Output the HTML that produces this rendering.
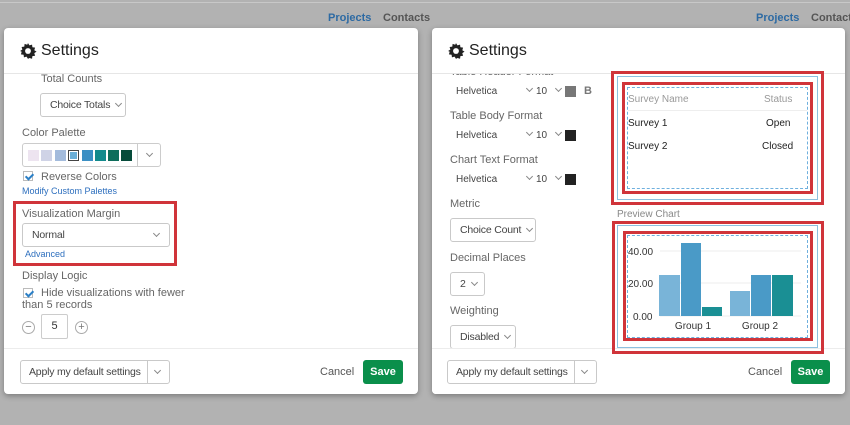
<!DOCTYPE html><html><head><style>
*{box-sizing:border-box;margin:0;padding:0}
body{width:850px;height:425px;background:#b2b2b2;font-family:"Liberation Sans",sans-serif;position:relative;overflow:hidden;color:#555}
.a{position:absolute;white-space:nowrap}
.m{position:absolute;background:#fff;border-radius:4px;box-shadow:0 2px 6px rgba(0,0,0,.3)}
.t{font-size:11px;color:#666}
.btn{position:absolute;border:1px solid #c9c9c9;border-radius:3px;background:#fff;font-size:10.5px;color:#444;display:flex;align-items:center;padding-left:9px;white-space:nowrap;letter-spacing:-0.2px}
.chev{display:inline-block;width:5px;height:5px;border-right:1px solid #888;border-bottom:1px solid #888;transform:rotate(45deg);margin-left:6px;margin-top:-3px;flex:none}
.red{position:absolute;border:3px solid #d0343a}
.cb{position:absolute;width:10px;height:10px;border:1px solid #bbb;background:#fff}
.cb:after{content:"";position:absolute;left:3px;top:0px;width:3px;height:6px;border-right:2px solid #2a7fc6;border-bottom:2px solid #2a7fc6;transform:rotate(45deg)}
.hd{position:absolute;font-size:16px;color:#222}
.save{position:absolute;background:#0a8f4b;color:#fff;font-weight:bold;font-size:11px;border-radius:3px;display:flex;align-items:center;justify-content:center}
.sw{position:absolute;top:150px;width:11px;height:11px}
</style></head><body>
<div class="a" style="left:0;top:2px;width:850px;height:1px;background:#c8c8c8"></div>
<div class="a" style="left:328px;top:12px;font-size:11px;font-weight:bold;color:#2d6aa3">Projects</div>
<div class="a" style="left:383px;top:12px;font-size:11px;font-weight:bold;color:#555">Contacts</div>
<div class="a" style="left:756px;top:12px;font-size:11px;font-weight:bold;color:#2d6aa3">Projects</div>
<div class="a" style="left:811px;top:12px;font-size:11px;font-weight:bold;color:#555">Contacts</div>

<!-- LEFT MODAL -->
<div class="m" style="left:4px;top:28px;width:414px;height:366px"></div>
<svg class="a" style="left:19px;top:42px" width="18" height="18" viewBox="0 0 16 16"><path d="M8 1l1.3 2 2.3-.7.3 2.4 2.4.3-.7 2.3 2 1.3-2 1.3.7 2.3-2.4.3-.3 2.4-2.3-.7L8 15l-1.3-2-2.3.7-.3-2.4-2.4-.3.7-2.3L1 8l2-1.3-.7-2.3 2.4-.3.3-2.4 2.3.7z" fill="#222"/><circle cx="8" cy="8" r="2.6" fill="#fff"/></svg>
<div class="hd" style="left:41px;top:42px">Settings</div>
<div class="a" style="left:4px;top:73px;width:414px;height:1px;background:#e6e6e6"></div>
<div class="a t" style="left:41px;top:73px">Total Counts</div>
<div class="btn" style="left:40px;top:93px;width:86px;height:24px">Choice Totals<span class="chev"></span></div>
<div class="a t" style="left:22px;top:127px">Color Palette</div>
<div class="a" style="left:22px;top:143px;width:116px;height:24px;border:1px solid #ccc;border-radius:3px 0 0 3px"></div>
<div class="a" style="left:137px;top:143px;width:24px;height:24px;border:1px solid #ccc;border-radius:0 3px 3px 0;display:flex;align-items:center;justify-content:center"><span class="chev" style="margin:0 0 3px 0"></span></div>
<div class="sw" style="left:28px;background:#ede4f0"></div>
<div class="sw" style="left:41px;background:#cfd3e6"></div>
<div class="sw" style="left:55px;background:#a3bbdc"></div>
<div class="sw" style="left:68px;background:#6aaed6;border:1px solid #444;outline:1px solid #fff;outline-offset:-2px"></div>
<div class="sw" style="left:82px;background:#3b8fc3"></div>
<div class="sw" style="left:95px;background:#128a8c"></div>
<div class="sw" style="left:108px;background:#0e6d5b"></div>
<div class="sw" style="left:121px;background:#064b3a"></div>
<div class="cb" style="left:23px;top:171px"></div>
<div class="a t" style="left:41px;top:171px">Reverse Colors</div>
<div class="a" style="left:22px;top:186px;font-size:9px;color:#2d6fbe">Modify Custom Palettes</div>
<div class="red" style="left:13px;top:201px;width:164px;height:65px"></div>
<div class="a t" style="left:22px;top:208px">Visualization Margin</div>
<div class="btn" style="left:22px;top:223px;width:148px;height:24px">Normal<span class="chev" style="position:absolute;right:10px;top:10px"></span></div>
<div class="a" style="left:25px;top:249px;font-size:9px;color:#2d6fbe">Advanced</div>
<div class="a t" style="left:22px;top:270px">Display Logic</div>
<div class="cb" style="left:23px;top:288px"></div>
<div class="a t" style="left:41px;top:287px">Hide visualizations with fewer</div>
<div class="a t" style="left:22px;top:299px">than 5 records</div>
<div class="a" style="left:22px;top:321px;width:13px;height:13px;border:1px solid #aaa;border-radius:50%;font-size:11px;line-height:10px;text-align:center;color:#777">−</div>
<div class="a" style="left:41px;top:314px;width:27px;height:25px;border:1px solid #ccc;border-radius:2px;font-size:11px;color:#333;text-align:center;line-height:23px">5</div>
<div class="a" style="left:75px;top:321px;width:13px;height:13px;border:1px solid #aaa;border-radius:50%;font-size:11px;line-height:11px;text-align:center;color:#777">+</div>
<div class="a" style="left:4px;top:348px;width:414px;height:1px;background:#ececec"></div>
<div class="btn" style="left:20px;top:360px;width:128px;height:24px;border-radius:3px 0 0 3px;padding-left:8px">Apply my default settings</div>
<div class="btn" style="left:147px;top:360px;width:23px;height:24px;border-radius:0 3px 3px 0;padding-left:6px"><span class="chev" style="margin:-3px 0 0 1px"></span></div>
<div class="a t" style="left:320px;top:366px;color:#555">Cancel</div>
<div class="save" style="left:363px;top:360px;width:40px;height:24px">Save</div>

<!-- RIGHT MODAL -->
<div class="m" style="left:432px;top:28px;width:413px;height:366px"></div>
<div class="a t" style="left:450px;top:66px;clip-path:inset(7px 0 0 0)">Table Header Format</div>
<div class="a" style="left:432px;top:30px;width:413px;height:43px;background:#fff;border-radius:4px 4px 0 0"></div>
<svg class="a" style="left:447px;top:42px" width="18" height="18" viewBox="0 0 16 16"><path d="M8 1l1.3 2 2.3-.7.3 2.4 2.4.3-.7 2.3 2 1.3-2 1.3.7 2.3-2.4.3-.3 2.4-2.3-.7L8 15l-1.3-2-2.3.7-.3-2.4-2.4-.3.7-2.3L1 8l2-1.3-.7-2.3 2.4-.3.3-2.4 2.3.7z" fill="#222"/><circle cx="8" cy="8" r="2.6" fill="#fff"/></svg>
<div class="hd" style="left:469px;top:42px">Settings</div>
<div class="a" style="left:432px;top:73px;width:413px;height:1px;background:#e6e6e6"></div>

<div class="a" style="left:456px;top:86px;font-size:10px;color:#444">Helvetica</div><span class="a chev" style="left:521px;top:89px"></span>
<div class="a" style="left:536px;top:86px;font-size:10px;color:#444">10</div><span class="a chev" style="left:550px;top:89px"></span>
<div class="a" style="left:565px;top:86px;width:11px;height:11px;background:#777"></div>
<div class="a" style="left:584px;top:85px;font-size:11px;font-weight:bold;color:#777">B</div>
<div class="a t" style="left:450px;top:110px">Table Body Format</div>
<div class="a" style="left:456px;top:130px;font-size:10px;color:#444">Helvetica</div><span class="a chev" style="left:521px;top:133px"></span>
<div class="a" style="left:536px;top:130px;font-size:10px;color:#444">10</div><span class="a chev" style="left:550px;top:133px"></span>
<div class="a" style="left:565px;top:130px;width:11px;height:11px;background:#222"></div>
<div class="a t" style="left:450px;top:154px">Chart Text Format</div>
<div class="a" style="left:456px;top:174px;font-size:10px;color:#444">Helvetica</div><span class="a chev" style="left:521px;top:177px"></span>
<div class="a" style="left:536px;top:174px;font-size:10px;color:#444">10</div><span class="a chev" style="left:550px;top:177px"></span>
<div class="a" style="left:565px;top:174px;width:11px;height:11px;background:#222"></div>
<div class="a t" style="left:450px;top:198px">Metric</div>
<div class="btn" style="left:450px;top:218px;width:86px;height:24px">Choice Count<span class="chev"></span></div>
<div class="a t" style="left:450px;top:252px">Decimal Places</div>
<div class="btn" style="left:450px;top:272px;width:35px;height:24px">2<span class="chev"></span></div>
<div class="a t" style="left:450px;top:305px">Weighting</div>
<div class="btn" style="left:450px;top:325px;width:66px;height:24px">Disabled<span class="chev"></span></div>
<div class="a" style="left:432px;top:348px;width:413px;height:46px;background:#fff;border-top:1px solid #ececec;border-radius:0 0 4px 4px"></div>
<div class="btn" style="left:447px;top:360px;width:128px;height:24px;border-radius:3px 0 0 3px;padding-left:8px">Apply my default settings</div>
<div class="btn" style="left:574px;top:360px;width:23px;height:24px;border-radius:0 3px 3px 0;padding-left:6px"><span class="chev" style="margin:-3px 0 0 1px"></span></div>
<div class="a t" style="left:748px;top:366px;color:#555">Cancel</div>
<div class="save" style="left:791px;top:360px;width:39px;height:24px">Save</div>

<!-- table preview -->
<div class="red" style="left:611px;top:71px;width:213px;height:134px"></div>
<div class="a" style="left:617px;top:76px;width:201px;height:124px;border:1px solid #8cc0e0"></div>
<div class="red" style="left:622px;top:82px;width:191px;height:112px"></div>
<div class="a" style="left:627px;top:87px;width:181px;height:102px;border:1px dashed #6fb0de"></div>
<div class="a" style="left:628px;top:94px;font-size:10px;color:#999">Survey Name</div>
<div class="a" style="left:764px;top:94px;font-size:10px;color:#999">Status</div>
<div class="a" style="left:628px;top:110px;width:179px;height:1px;background:#eee"></div>
<div class="a" style="left:628px;top:118px;font-size:10px;color:#222">Survey 1</div>
<div class="a" style="left:766px;top:118px;font-size:10px;color:#222">Open</div>
<div class="a" style="left:628px;top:141px;font-size:10px;color:#222">Survey 2</div>
<div class="a" style="left:762px;top:141px;font-size:10px;color:#222">Closed</div>

<div class="a" style="left:617px;top:209px;font-size:10px;color:#888">Preview Chart</div>
<div class="red" style="left:612px;top:221px;width:212px;height:133px"></div>
<div class="a" style="left:617px;top:225px;width:201px;height:123px;border:1px solid #8cc0e0"></div>
<div class="red" style="left:623px;top:231px;width:190px;height:110px"></div>
<div class="a" style="left:627px;top:235px;width:181px;height:103px;border:1px dashed #6fb0de"></div>
<svg class="a" style="left:600px;top:200px" width="250" height="225">
<g stroke="#eee"><line x1="60" y1="51" x2="201" y2="51"/><line x1="60" y1="83" x2="201" y2="83"/><line x1="60" y1="116" x2="201" y2="116"/></g>
<g font-family="Liberation Sans" font-size="10" fill="#333"><text x="28" y="55">40.00</text><text x="28" y="87">20.00</text><text x="33" y="120">0.00</text>
<text x="93" y="129" text-anchor="middle">Group 1</text><text x="160" y="129" text-anchor="middle">Group 2</text></g>
<rect x="59" y="75" width="21" height="41" fill="#79b4d8"/><rect x="81" y="43" width="20" height="73" fill="#4a9ac7"/><rect x="102" y="107" width="20" height="9" fill="#1a8f94"/>
<rect x="130" y="91" width="20" height="25" fill="#79b4d8"/><rect x="151" y="75" width="20" height="41" fill="#4a9ac7"/><rect x="172" y="75" width="21" height="41" fill="#1a8f94"/>
</svg>
</body></html>
